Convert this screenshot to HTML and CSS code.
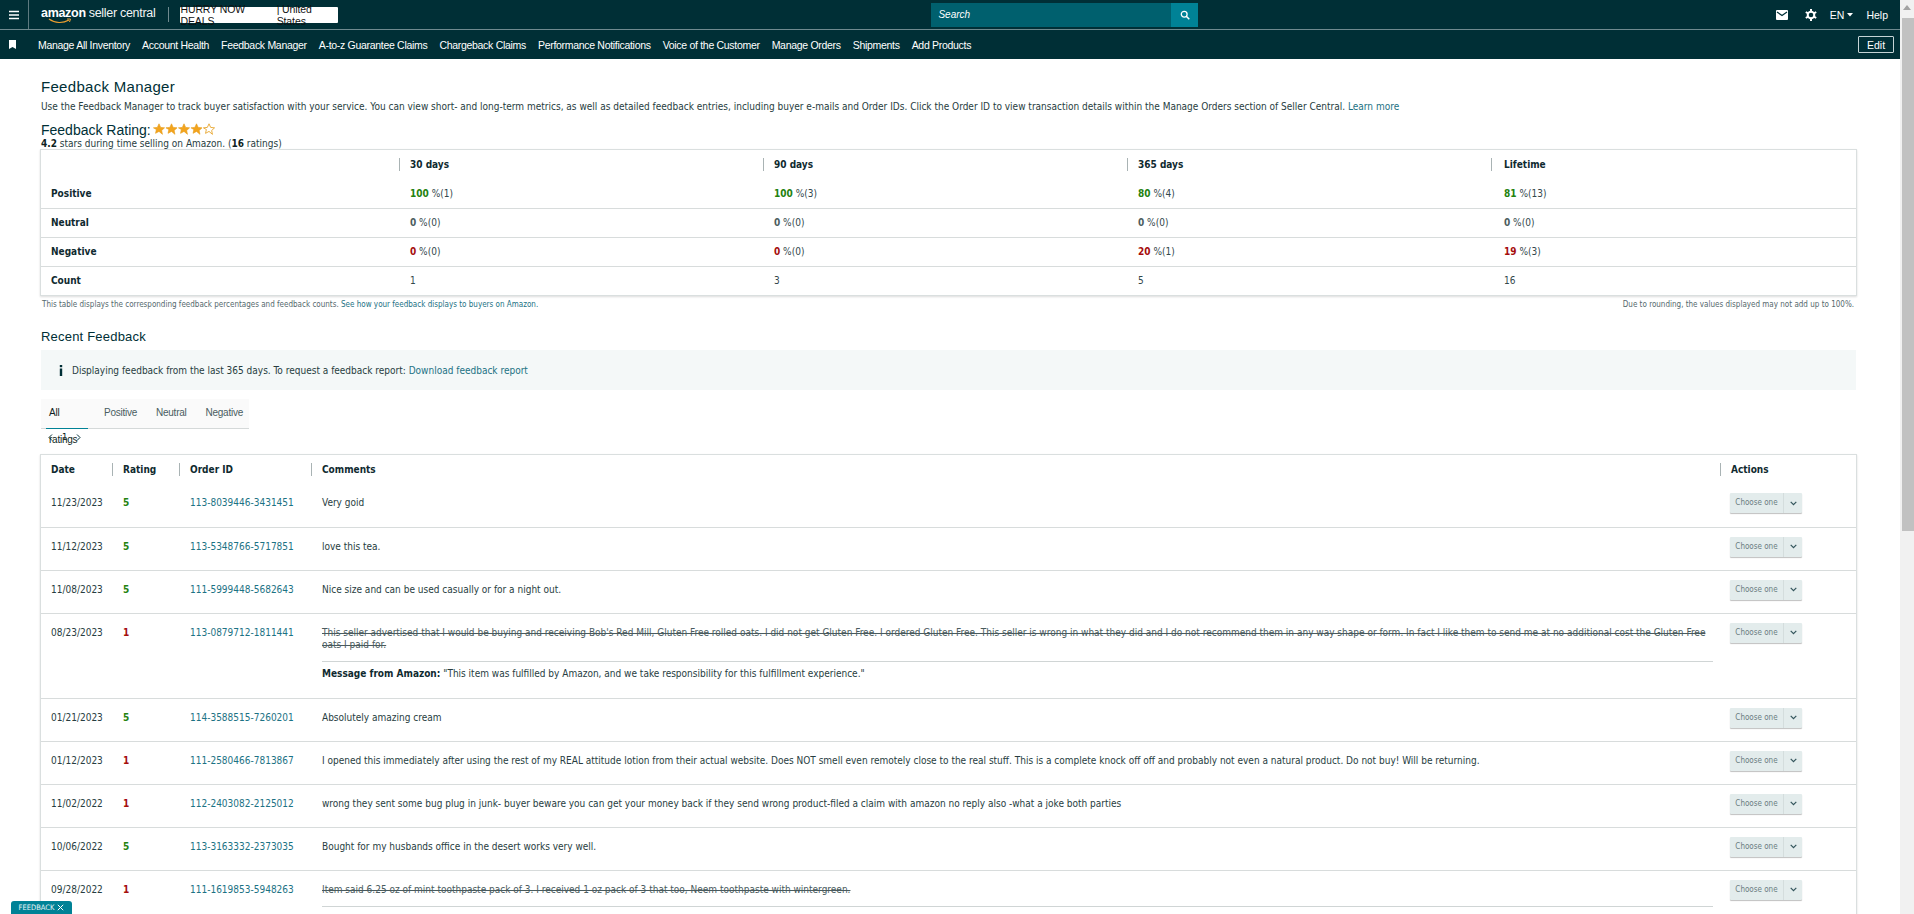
FILE: index.html
```html
<!DOCTYPE html>
<html lang="en">
<head>
<meta charset="utf-8">
<title>Feedback Manager</title>
<link rel="stylesheet" href="styles.css">
</head>
<body>
<div class="app">
  <div class="main">
    <header class="topbar">
      <button class="burger" aria-label="Menu"><svg width="12" height="10" viewBox="0 0 12 10"><path d="M1 1.5h10M1 5h10M1 8.500h10" stroke="#fff" stroke-width="1.300"/></svg></button>
      <div class="logo">
        <span class="logo-amazon">amazon<svg class="smile" width="24" height="6" viewBox="0 0 24 6"><path d="M1 1c6 4.500 14 4.500 20 1" fill="none" stroke="#f0a030" stroke-width="1.200"/><path d="M19 1h3.500l-1 3" fill="none" stroke="#f0a030" stroke-width="1"/></svg></span>
        <span class="logo-sc">seller central</span>
      </div>
      <span class="vsep"></span>
      <div class="store"><span class="store-name">HURRY NOW DEALS</span> | United States</div>
      <div class="search">
        <span class="search-label">Search</span>
        <span class="search-btn"><svg width="10" height="10" viewBox="0 0 10 10"><circle cx="4.200" cy="4.200" r="2.900" fill="none" stroke="#fff" stroke-width="1.300"/><path d="M6.300 6.300L9.300 9.300" stroke="#fff" stroke-width="1.500"/></svg></span>
      </div>
      <div class="top-right">
        <svg width="12" height="10" viewBox="0 0 12 10"><rect width="12" height="10" rx="1" fill="#fff"/><path d="M1 2l5 3.500L11 2" fill="none" stroke="#002f36" stroke-width="1.200"/></svg>
        <svg class="gear" width="12" height="12" viewBox="0 0 12 12"><circle cx="6" cy="6" r="3.300" fill="none" stroke="#fff" stroke-width="2"/><path d="M6 0v2.500M6 9.500V12M.8 3l2.200 1.300M9 7.700l2.200 1.300M.8 9l2.200-1.300M9 4.300L11.200 3" stroke="#fff" stroke-width="2"/></svg>
        <span class="lang">EN <svg width="6" height="4" viewBox="0 0 6 4"><path d="M0 0h6L3 3.500z" fill="#fff"/></svg></span>
        <span class="help">Help</span>
      </div>
    </header>
    <nav class="navbar">
      <svg class="bookmark" width="7" height="9" viewBox="0 0 7 9"><path d="M0 0h7v9L3.500 7 0 9z" fill="#fff"/></svg>
      <a>Manage All Inventory</a>
      <a>Account Health</a>
      <a>Feedback Manager</a>
      <a>A-to-z Guarantee Claims</a>
      <a>Chargeback Claims</a>
      <a>Performance Notifications</a>
      <a>Voice of the Customer</a>
      <a>Manage Orders</a>
      <a>Shipments</a>
      <a>Add Products</a>
      <button class="edit">Edit</button>
    </nav>
    <main class="page">
      <h1 class="title">Feedback Manager</h1>
      <p class="desc">Use the Feedback Manager to track buyer satisfaction with your service. You can view short- and long-term metrics, as well as detailed feedback entries, including buyer e-mails and Order IDs. Click the Order ID to view transaction details within the Manage Orders section of Seller Central. <a class="link">Learn more</a></p>
      <div class="rating-line">
        <span class="rating-label">Feedback Rating:</span>
        <svg class="stars" width="62" height="13" viewBox="0 0 62 13">
          <defs><path id="star" d="M6 .8l1.650 3.600 3.900.45-2.900 2.650.8 3.850L6 8.400l-3.450 1.950.8-3.850L.45 4.850l3.900-.45z"/></defs>
          <use href="#star" fill="#f3a41e" stroke="#e59a14" stroke-width=".6"/>
          <use href="#star" x="12.500" fill="#f3a41e" stroke="#e59a14" stroke-width=".6"/>
          <use href="#star" x="25" fill="#f3a41e" stroke="#e59a14" stroke-width=".6"/>
          <use href="#star" x="37.500" fill="#f3a41e" stroke="#e59a14" stroke-width=".6"/>
          <use href="#star" x="50" fill="none" stroke="#e59a14" stroke-width=".8"/>
        </svg>
      </div>
      <p class="rating-sub"><b>4.2</b> stars during time selling on Amazon. (<b>16</b> ratings)</p>

      <table class="card metrics">
        <colgroup><col class="m0"><col class="m1"><col class="m1"><col class="m1"><col></colgroup>
        <thead><tr><th></th><th><span class="th-in">30 days</span></th><th><span class="th-in">90 days</span></th><th><span class="th-in">365 days</span></th><th><span class="th-in th-last">Lifetime</span></th></tr></thead>
        <tbody>
          <tr><th>Positive</th><td><b class="g">100</b> %(1)</td><td><b class="g">100</b> %(3)</td><td><b class="g">80</b> %(4)</td><td class="last"><b class="g">81</b> %(13)</td></tr>
          <tr><th>Neutral</th><td><b class="n">0</b> %(0)</td><td><b class="n">0</b> %(0)</td><td><b class="n">0</b> %(0)</td><td class="last"><b class="n">0</b> %(0)</td></tr>
          <tr><th>Negative</th><td><b class="r">0</b> %(0)</td><td><b class="r">0</b> %(0)</td><td><b class="r">20</b> %(1)</td><td class="last"><b class="r">19</b> %(3)</td></tr>
          <tr><th>Count</th><td>1</td><td>3</td><td>5</td><td class="last">16</td></tr>
        </tbody>
      </table>
      <div class="notes">
        <span>This table displays the corresponding feedback percentages and feedback counts. <a class="link">See how your feedback displays to buyers on Amazon.</a></span>
        <span>Due to rounding, the values displayed may not add up to 100%.</span>
      </div>

      <h2 class="subtitle">Recent Feedback</h2>
      <div class="info">
        <svg width="4" height="11" viewBox="0 0 4 11"><rect x=".8" y="0" width="2.400" height="2.200" fill="#002f36"/><rect x=".8" y="3.500" width="2.400" height="7.500" fill="#002f36"/></svg>
        <span>Displaying feedback from the last 365 days. To request a feedback report: <a class="link">Download feedback report</a></span>
      </div>
      <div class="tabs">
        <a class="tab active">All ratings</a>
        <a class="tab">Positive</a>
        <a class="tab">Neutral</a>
        <a class="tab">Negative</a>
      </div>
      <div class="pager">
        <svg width="5" height="7" viewBox="0 0 5 7"><path d="M4 .5L1 3.500 4 6.500" fill="none" stroke="#002f36"/></svg>
        <span>1</span>
        <svg width="5" height="7" viewBox="0 0 5 7"><path d="M1 .5L4 3.500 1 6.500" fill="none" stroke="#002f36"/></svg>
      </div>

      <table class="card feedback">
        <colgroup><col class="f-date"><col class="f-rate"><col class="f-order"><col><col class="f-act"></colgroup>
        <thead><tr><th class="f-first">Date</th><th><span class="th-in">Rating</span></th><th><span class="th-in">Order ID</span></th><th><span class="th-in">Comments</span></th><th><span class="th-in">Actions</span></th></tr></thead>
        <tbody>
          <tr><td>11/23/2023</td><td><b class="g">5</b></td><td><a class="link">113-8039446-3431451</a></td><td>Very goid</td><td><div class="dd"><span>Choose one</span><i><svg width="7" height="5" viewBox="0 0 7 5"><path d="M.7.8l2.800 2.800L6.300.8" fill="none" stroke="#33555c" stroke-width="1.200"/></svg></i></div></td></tr>
          <tr><td>11/12/2023</td><td><b class="g">5</b></td><td><a class="link">113-5348766-5717851</a></td><td>love this tea.</td><td><div class="dd"><span>Choose one</span><i><svg width="7" height="5" viewBox="0 0 7 5"><path d="M.7.8l2.800 2.800L6.300.8" fill="none" stroke="#33555c" stroke-width="1.200"/></svg></i></div></td></tr>
          <tr><td>11/08/2023</td><td><b class="g">5</b></td><td><a class="link">111-5999448-5682643</a></td><td>Nice size and can be used casually or for a night out.</td><td><div class="dd"><span>Choose one</span><i><svg width="7" height="5" viewBox="0 0 7 5"><path d="M.7.8l2.800 2.800L6.300.8" fill="none" stroke="#33555c" stroke-width="1.200"/></svg></i></div></td></tr>
          <tr class="msg"><td>08/23/2023</td><td><b class="r">1</b></td><td><a class="link">113-0879712-1811441</a></td><td><s>This seller advertised that I would be buying and receiving Bob's Red Mill, Gluten Free rolled oats. I did not get Gluten Free. I ordered Gluten Free. This seller is wrong in what they did and I do not recommend them in any way shape or form. In fact I like them to send me at no additional cost the Gluten Free oats I paid for.</s><div class="amz"><b>Message from Amazon:</b> "This item was fulfilled by Amazon, and we take responsibility for this fulfillment experience."</div></td><td><div class="dd"><span>Choose one</span><i><svg width="7" height="5" viewBox="0 0 7 5"><path d="M.7.8l2.800 2.800L6.300.8" fill="none" stroke="#33555c" stroke-width="1.200"/></svg></i></div></td></tr>
          <tr><td>01/21/2023</td><td><b class="g">5</b></td><td><a class="link">114-3588515-7260201</a></td><td>Absolutely amazing cream</td><td><div class="dd"><span>Choose one</span><i><svg width="7" height="5" viewBox="0 0 7 5"><path d="M.7.8l2.800 2.800L6.300.8" fill="none" stroke="#33555c" stroke-width="1.200"/></svg></i></div></td></tr>
          <tr><td>01/12/2023</td><td><b class="r">1</b></td><td><a class="link">111-2580466-7813867</a></td><td>I opened this immediately after using the rest of my REAL attitude lotion from their actual website. Does NOT smell even remotely close to the real stuff. This is a complete knock off off and probably not even a natural product. Do not buy! Will be returning.</td><td><div class="dd"><span>Choose one</span><i><svg width="7" height="5" viewBox="0 0 7 5"><path d="M.7.8l2.800 2.800L6.300.8" fill="none" stroke="#33555c" stroke-width="1.200"/></svg></i></div></td></tr>
          <tr><td>11/02/2022</td><td><b class="r">1</b></td><td><a class="link">112-2403082-2125012</a></td><td>wrong they sent some bug plug in junk- buyer beware you can get your money back if they send wrong product-filed a claim with amazon no reply also -what a joke both parties</td><td><div class="dd"><span>Choose one</span><i><svg width="7" height="5" viewBox="0 0 7 5"><path d="M.7.8l2.800 2.800L6.300.8" fill="none" stroke="#33555c" stroke-width="1.200"/></svg></i></div></td></tr>
          <tr><td>10/06/2022</td><td><b class="g">5</b></td><td><a class="link">113-3163332-2373035</a></td><td>Bought for my husbands office in the desert works very well.</td><td><div class="dd"><span>Choose one</span><i><svg width="7" height="5" viewBox="0 0 7 5"><path d="M.7.8l2.800 2.800L6.300.8" fill="none" stroke="#33555c" stroke-width="1.200"/></svg></i></div></td></tr>
          <tr class="msg"><td>09/28/2022</td><td><b class="r">1</b></td><td><a class="link">111-1619853-5948263</a></td><td><s>Item said 6.25 oz of mint toothpaste pack of 3. I received 1 oz pack of 3 that too, Neem toothpaste with wintergreen.</s><div class="amz"><b>Message from Amazon:</b> "This item was fulfilled by Amazon, and we take responsibility for this fulfillment experience."</div></td><td><div class="dd"><span>Choose one</span><i><svg width="7" height="5" viewBox="0 0 7 5"><path d="M.7.8l2.800 2.800L6.300.8" fill="none" stroke="#33555c" stroke-width="1.200"/></svg></i></div></td></tr>
        </tbody>
      </table>
    </main>
  </div>
  <div class="scrollbar">
    <svg class="sb-up" width="8" height="5" viewBox="0 0 8 5"><path d="M4 0l4 5H0z" fill="#a3a3a3"/></svg>
    <div class="sb-thumb"></div>
  </div>
  <div class="fb-tab">FEEDBACK <svg width="7" height="7" viewBox="0 0 7 7"><path d="M.8.8l5.400 5.400M6.200.8L.8 6.200" stroke="#fff" stroke-width="1"/></svg></div>
</div>
</body>
</html>
```

FILE: styles.css
```css
* { box-sizing: border-box; }
html, body { margin: 0; height: 100%; overflow: hidden; background: #fff; }
body { font-family: "DejaVu Sans Condensed", "DejaVu Sans", sans-serif; font-stretch: condensed; font-size: 10px; color: #0f1f22; }
p, h1, h2 { margin: 0; }
.app { display: flex; height: 914px; width: 1914px; overflow: hidden; position: relative; }
.main { width: 1900px; flex: none; overflow: hidden; height: 914px; }

.topbar { height: 30px; background: #002f36; border-bottom: 1px solid #6f8a8f; display: flex; align-items: center; color: #fff; font-family: "Liberation Sans", Arial, sans-serif; }
.burger { width: 29px; height: 29px; padding: 0; background: none; border: 0; border-right: 1px solid #5d7a80; display: flex; align-items: center; justify-content: center; }
.logo { margin-left: 12px; display: flex; align-items: flex-start; gap: 3px; font-size: 12.500px; letter-spacing: -.3px; line-height: 14px; height: 18px; }
.logo-amazon { position: relative; font-weight: 700; }
.smile { position: absolute; left: 7px; top: 12px; }
.logo-sc { font-weight: 400; opacity: .95; }
.vsep { width: 1px; height: 15px; background: #6f8a8f; margin: 0 11px 0 13px; }
.store { background: #fff; color: #111; height: 16px; width: 158px; border-radius: 1px; font-size: 10.500px; display: flex; align-items: center; justify-content: center; gap: 3px; letter-spacing: -.1px; }
.store-name { font-weight: 400; }
.search { margin-left: 593px; width: 267px; height: 24px; background: #00606e; display: flex; align-items: center; justify-content: space-between; font-style: italic; font-size: 10px; }
.search-label { padding-left: 7px; }
.search-btn { width: 27px; height: 24px; background: #008296; display: flex; align-items: center; justify-content: center; }
.top-right { margin-left: auto; display: flex; align-items: center; padding-right: 12px; font-size: 10.500px; }
.gear { margin-left: 17px; }
.lang { margin-left: 13px; display: flex; align-items: center; gap: 3px; }
.help { margin-left: 13px; }

.navbar { height: 29px; background: #002f36; display: flex; align-items: center; color: #fff; font-family: "Liberation Sans", Arial, sans-serif; font-size: 10.500px; letter-spacing: -.3px; gap: 12px; padding-right: 6px; }
.bookmark { margin: 0 22px 0 9px; }
.navbar .bookmark + a { margin-left: -12px; }
.edit { margin-left: auto; width: 36px; height: 17px; background: #002f36; border: 1px solid #c5d3d5; color: #fff; font: inherit; padding: 0; border-radius: 1px; }

.page { padding: 18px 44px 0 41px; }
.title { font-family: "Liberation Sans", Arial, sans-serif; font-size: 15px; font-weight: 400; letter-spacing: .3px; color: #002f36; line-height: 20px; }
.desc { line-height: 14px; margin-top: 3px; color: #273d41; }
.link { color: #1c7284; }
.rating-line { display: flex; align-items: center; gap: 2px; margin-top: 8px; height: 15px; }
.rating-label { font-family: "Liberation Sans", Arial, sans-serif; font-size: 14px; color: #002f36; }
.rating-sub { line-height: 12px; margin-top: 1px; color: #273d41; }
.rating-sub b { color: #0f1f22; }

.card { width: 100%; table-layout: fixed; border-collapse: collapse; background: #fff; box-shadow: 0 0 0 1px #dadfdf, 0 1px 2px 1px rgba(0,0,0,.14); }
.card th { font-weight: 700; text-align: left; color: #0f2a2f; }
.card th, .card td { padding: 0; border-bottom: 1px solid #d8dcdc; }
.card tr:last-child th, .card tr:last-child td { border-bottom: 0; }
.th-in { display: block; border-left: 1px solid #a9b3b4; padding-left: 10px; line-height: 13px; margin-left: 0; }

.metrics { margin-top: 0; }
.metrics tr { height: 29px; }
.metrics tbody th { padding-left: 10px; }
.metrics .m0 { width: 358px; }
.metrics .m1 { width: 364px; }
.metrics td { padding-left: 11px; color: #33474b; }
.metrics td.last { padding-left: 13px; }
.th-last { padding-left: 12px; }
.g { color: #24820f; }
.r { color: #a50d0d; }
.n { color: #4d5d60; }

.notes { display: flex; justify-content: space-between; font-size: 8px; color: #55696d; margin-top: 5px; padding: 0 2px 0 1px; line-height: 10px; }
.subtitle { font-family: "Liberation Sans", Arial, sans-serif; font-size: 13px; font-weight: 400; letter-spacing: .2px; color: #002f36; line-height: 16px; margin-top: 19px; }
.info { height: 40px; background: #f4f8f8; margin-top: 5px; display: flex; align-items: center; gap: 9px; padding-left: 18px; color: #273d41; }

.tabs { margin-top: 9px; width: 208px; height: 30px; background: #fafafa; border-bottom: 1px solid #d5d9d9; display: flex; font-family: "Liberation Sans", Arial, sans-serif; font-size: 10px; letter-spacing: -.25px; color: #4a5d61; padding-left: 8px; gap: 19px; }
.tab { line-height: 27px; height: 30px; }
.tab.active { color: #0f1f22; border-bottom: 1px solid #008296; padding: 0 3px; margin: 0 -3px; width: 42px; }
.pager { display: flex; align-items: center; gap: 9px; margin: 2px 0 0 7px; height: 12px; line-height: 12px; font-size: 9.500px; }

.feedback { margin-top: 12px; }
.feedback .f-date { width: 71px; }
.feedback .f-rate { width: 67px; }
.feedback .f-order { width: 132px; }
.feedback .f-act { width: 136px; }
.feedback thead tr { height: 29px; }
.f-first { padding-left: 10px !important; }
.feedback td { vertical-align: top; padding-top: 13px; height: 43px; color: #273d41; line-height: 12px; }
.feedback td:first-child { padding-left: 10px; }
.feedback td:nth-child(2), .feedback td:nth-child(3), .feedback td:nth-child(4) { padding-left: 11px; }
.feedback td:nth-child(4) { padding-right: 7px; }
.feedback td:nth-child(5) { padding: 9px 0 0 10px; }
s { color: #4a5b5e; }
.amz { border-top: 1px solid #d0d5d5; margin-top: 10px; padding-top: 6px; height: 37px; color: #273d41; }
.amz b { color: #0f2a2f; }

.dd { width: 72px; height: 20px; background: #e3ecec; display: flex; border-radius: 1px; box-shadow: 0 1px 1px rgba(0,0,0,.25); font-size: 8px; color: #6a7c7f; }
.dd span { width: 53px; text-align: center; line-height: 20px; }
.dd i { flex: 1; border-left: 1px solid #d4dddd; display: flex; align-items: center; justify-content: center; }

.scrollbar { width: 14px; flex: none; background: #f1f1f1; position: relative; display: flex; flex-direction: column; align-items: center; padding-top: 5px; }
.sb-thumb { margin-top: 8px; width: 12px; height: 513px; background: #c1c1c1; margin-left: 2px; }
.fb-tab { position: absolute; left: 11px; bottom: 0; width: 61px; height: 13px; background: #008296; border-radius: 3px 3px 0 0; color: #e8f5f6; font-size: 7.500px; display: flex; align-items: center; justify-content: center; gap: 3px; font-family: "DejaVu Sans", sans-serif; }
```
